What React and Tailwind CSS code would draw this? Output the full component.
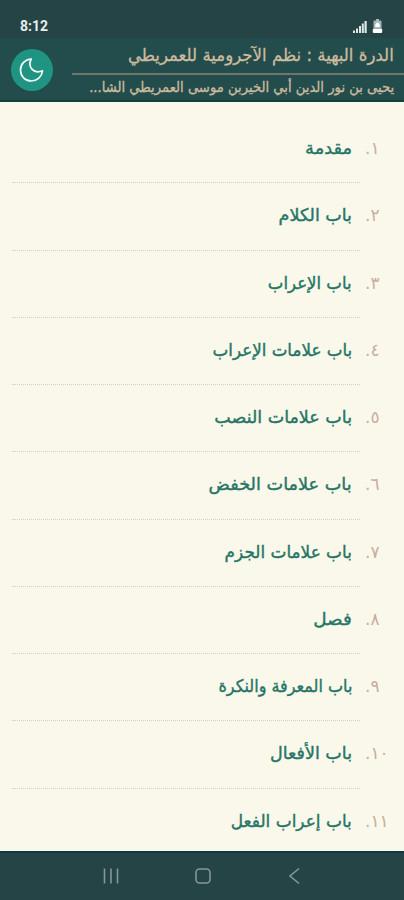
import React from 'react';

const chapters = [
    { number: '١', title: 'مقدمة', fit: 'scale-x-[1.02]' },
    { number: '٢', title: 'باب الكلام', fit: 'scale-x-100' },
    { number: '٣', title: 'باب الإعراب', fit: 'scale-x-[0.945]' },
    { number: '٤', title: 'باب علامات الإعراب', fit: 'scale-x-[0.955]' },
    { number: '٥', title: 'باب علامات النصب', fit: 'scale-x-100' },
    { number: '٦', title: 'باب علامات الخفض', fit: 'scale-x-[1.01]' },
    { number: '٧', title: 'باب علامات الجزم', fit: 'scale-x-[0.965]' },
    { number: '٨', title: 'فصل', fit: 'scale-x-[1.05]' },
    { number: '٩', title: 'باب المعرفة والنكرة', fit: 'scale-x-[0.915]' },
    { number: '١٠', title: 'باب الأفعال', fit: 'scale-x-100' },
    { number: '١١', title: 'باب إعراب الفعل', fit: 'scale-x-[0.97]' },
];

const StatusBar = () => (
    <div dir="ltr" className="h-[38px] shrink-0 bg-[#244446] flex items-end justify-between pl-5 pr-[21px] pb-1">
        <span className="font-['Roboto',sans-serif] text-[14px] leading-4 font-bold text-[#e6eeee]">8:12</span>
        <div className="flex items-end gap-[5px] pb-px">
            <svg width="14" height="13" viewBox="0 0 14 13" fill="#dfe8e8">
                <rect x="0" y="10.5" width="2" height="2.5" />
                <rect x="3" y="8.5" width="2" height="4.5" />
                <rect x="6" y="6" width="2" height="7" />
                <rect x="8.8" y="3.5" width="2" height="9.5" />
                <rect x="11.5" y="1" width="2.2" height="12" />
            </svg>
            <svg width="11" height="14" viewBox="0 0 11 14">
                <path d="M4 0h3v1.5h1.5q1 0 1 1V10h-8V2.5q0-1 1-1H4z" fill="#a5b7b8" />
                <path d="M.8 10h9.4v3q0 1-1 1H1.800q-1 0-1-1z" fill="#fff" />
                <path d="M5.500 3L3.300 5.500V8h4.400V5.500z" fill="#fff" />
            </svg>
        </div>
    </div>
);

const Header = () => (
    <header className="h-[64px] shrink-0 bg-[#234d4c] border-b-2 border-[#12413f] flex flex-row-reverse">
        <div className="w-[72px] shrink-0 pl-[11px] pt-[11px]" dir="ltr">
            <button className="size-[42px] rounded-full bg-[#209482] flex items-center justify-center">
                <svg width="26" height="26" viewBox="0 0 26 26" fill="none" stroke="#f4fbf8" strokeWidth="1.7" strokeLinejoin="round">
                    <path d="M12.3 2C6 2.300 1.500 7 1.500 13.100c0 6.200 4.600 10.900 10.800 10.900 5.800 0 10.500-4.200 11.200-10.200-4.500 1.700-8.300.900-10.600-1.700-2.300-2.700-2.600-6.500-.6-10.100z" />
                </svg>
            </button>
        </div>
        <div className="flex-1 min-w-0">
            <h1 className="h-[35px] pr-[10px] text-[17.5px] leading-[34px] whitespace-nowrap text-[#cdbb9f]">
                <span className="inline-block origin-right scale-x-[0.947] [-webkit-text-stroke:0.3px_#cdbb9f]">الدرة البهية : نظم الآجرومية للعمريطي</span>
            </h1>
            <div className="h-[2px] bg-[#71766a]" />
            <p className="h-[25px] pr-[10px] text-[14px] leading-[25px] whitespace-nowrap text-[#cdbb9f]">
                <span className="inline-block origin-right scale-x-[0.941] [-webkit-text-stroke:0.3px_#cdbb9f]">يحيى بن نور الدين أبي الخيربن موسى العمريطي الشا...</span>
            </p>
        </div>
    </header>
);

const ChapterRow = ({ number, title, fit }) => (
    <li className="h-[67.25px] shrink-0 flex">
        <div dir="ltr" className="w-[44px] shrink-0 pl-[5px]">
            <span dir="rtl" className="inline-block text-[17px] leading-[64px] whitespace-nowrap text-[#c9ad9e]">{number}.</span>
        </div>
        <div className="w-[348px] border-b-[1.5px] border-dotted border-[#cfcfc4] pr-[8px] text-[17.5px] leading-[64px] whitespace-nowrap text-[#267565]">
            <span className={`inline-block origin-right [-webkit-text-stroke:0.4px_#267565] ${fit}`}>{title}</span>
        </div>
    </li>
);

const NavigationBar = () => (
    <nav dir="ltr" className="h-[49px] shrink-0 bg-[#244446] border-t-2 border-[#0d3b40]">
        <svg width="404" height="47" viewBox="0 0 404 47" fill="none" stroke="#84979a" strokeWidth="1.6">
            <path d="M104.5 15.5v15M111 15.5v15M117.5 15.5v15" />
            <rect x="196" y="16" width="14" height="14" rx="3.5" />
            <path d="M299 15.5l-9 7.5 9 7.5" />
        </svg>
    </nav>
);

const App = () => {
    return (
        <div dir="rtl" className="w-[404px] h-[900px] overflow-hidden flex flex-col bg-[#faf8eb] font-['DejaVu_Sans',sans-serif]">
            <StatusBar />
            <Header />
            <ul className="flex-1 min-h-0 overflow-hidden pt-[14px] flex flex-col">
                {chapters.map((chapter) => (
                    <ChapterRow key={chapter.number} {...chapter} />
                ))}
            </ul>
            <NavigationBar />
        </div>
    );
};

export default App;
